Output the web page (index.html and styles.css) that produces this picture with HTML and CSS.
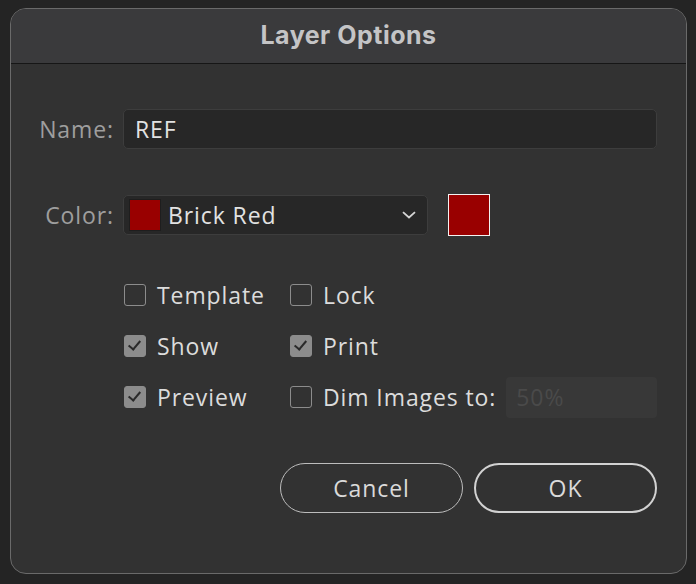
FILE: index.html
```html
<!DOCTYPE html>
<html lang="en">
<head>
    <meta charset="UTF-8">
    <meta name="viewport" content="width=device-width, initial-scale=1.0">
    <title>Layer Options</title>
    <link rel="stylesheet" href="styles.css">
</head>
<body>

    <div class="dialog">
        <div class="title-bar">Layer Options</div>

        <div class="form">
            <div class="field-row">
                <label class="field-label" for="layer-name">Name:</label>
                <input id="layer-name" class="text-field" type="text" value="REF">
            </div>

            <div class="field-row color-row">
                <span class="field-label">Color:</span>
                <div class="color-select">
                    <span class="chip"></span>
                    <span class="color-name">Brick Red</span>
                    <svg class="chevron" width="14" height="8" viewBox="0 0 14 8">
                        <path d="M1 1.2 L7 6.5 L13 1.2" fill="none" stroke="#d4d4d4" stroke-width="1.8"/>
                    </svg>
                </div>
                <span class="swatch"></span>
            </div>

            <div class="options">
                <div class="option"><span class="box"></span>Template</div>
                <div class="option"><span class="box"></span>Lock</div>
                <div class="option"><span class="box checked"></span>Show</div>
                <div class="option"><span class="box checked"></span>Print</div>
                <div class="option"><span class="box checked"></span>Preview</div>
                <div class="option">
                    <span class="box"></span>Dim Images to:
                    <input class="dim-field" type="text" value="50%" disabled>
                </div>
            </div>

            <div class="buttons">
                <button class="btn">Cancel</button>
                <button class="btn btn-default">OK</button>
            </div>
        </div>
    </div>

</body>
</html>
```

FILE: styles.css
```css
body {
    background-color: #242424;
    margin: 0;
    padding: 8px 9px 10px 10px;
    font-family: 'Open Sans', 'Noto Sans', sans-serif;
    color: #dcdcdc;
}
.dialog {
    width: 675px;
    height: 564px;
    background-color: #323232;
    border: 1px solid #6a6a6a;
    border-radius: 16px;
    overflow: hidden;
}
.title-bar {
    height: 55px;
    background-color: #3a3a3c;
    border-bottom: 1px solid #161616;
    box-sizing: border-box;
    text-align: center;
    line-height: 52px;
    font-family: Inter, 'Liberation Sans', sans-serif;
    font-weight: 700;
    font-size: 25px;
    color: #c4c4c6;
    letter-spacing: 0.5px;
}
.form {
    padding: 45px 29px 0 0;
    font-size: 23px;
    letter-spacing: 0.9px;
}
.field-row {
    display: flex;
    align-items: center;
    height: 40px;
}
.color-row {
    margin-top: 46px;
}
.field-label {
    width: 103px;
    margin-right: 9px;
    text-align: right;
    color: #9e9e9e;
}
.text-field {
    flex: 1;
    height: 40px;
    box-sizing: border-box;
    background-color: #272727;
    border: 1px solid #3d3d3d;
    border-radius: 5px;
    padding: 0 11px;
    font-family: inherit;
    font-size: 23px;
    letter-spacing: 0.9px;
    color: #e2e2e2;
    outline: none;
}
.color-select {
    width: 305px;
    height: 40px;
    box-sizing: border-box;
    display: flex;
    align-items: center;
    background-color: #272727;
    border: 1px solid #3d3d3d;
    border-radius: 5px;
    padding: 0 11px 0 5px;
}
.chip {
    width: 30px;
    height: 30px;
    background-color: #990000;
    border: 1px solid #1e1e1e;
}
.color-name {
    flex: 1;
    margin-left: 7px;
    color: #e2e2e2;
}
.swatch {
    width: 40px;
    height: 40px;
    margin-left: 20px;
    background-color: #990000;
    border: 1px solid #f2f2f2;
}
.options {
    display: grid;
    grid-template-columns: 166px minmax(0, 1fr);
    grid-auto-rows: 50px;
    row-gap: 1px;
    margin: 35px 0 0 113px;
}
.option {
    display: flex;
    align-items: center;
    color: #dcdcdc;
}
.box {
    width: 20px;
    height: 20px;
    margin-right: 11px;
    border: 1.5px solid #8c8c8c;
    border-radius: 3px;
    flex-shrink: 0;
}
.box.checked {
    background-color: #8c8c8c;
    position: relative;
}
/* tick drawn as the corner of a rotated box */
.box.checked::after {
    content: '';
    position: absolute;
    left: 6px;
    top: 2px;
    width: 5px;
    height: 10px;
    border-right: 2.5px solid #2a2a2a;
    border-bottom: 2.5px solid #2a2a2a;
    transform: rotate(40deg);
}
.dim-field {
    flex: 1;
    width: 0;
    min-width: 0;
    height: 41px;
    box-sizing: border-box;
    margin-left: 10px;
    background-color: #383838;
    border: none;
    border-radius: 4px;
    padding: 0 10px;
    font-family: inherit;
    font-size: 23px;
    letter-spacing: 0.9px;
    color: #4a4a4a;
}
.buttons {
    display: flex;
    justify-content: flex-end;
    gap: 11px;
    margin-top: 41px;
}
.btn {
    width: 183px;
    height: 50px;
    background: transparent;
    border: 1.5px solid #bdbdbd;
    border-radius: 25px;
    font-family: inherit;
    font-size: 23px;
    letter-spacing: 0.9px;
    color: #dadada;
}
.btn-default {
    border: 2.5px solid #d2d2d2;
}
```
